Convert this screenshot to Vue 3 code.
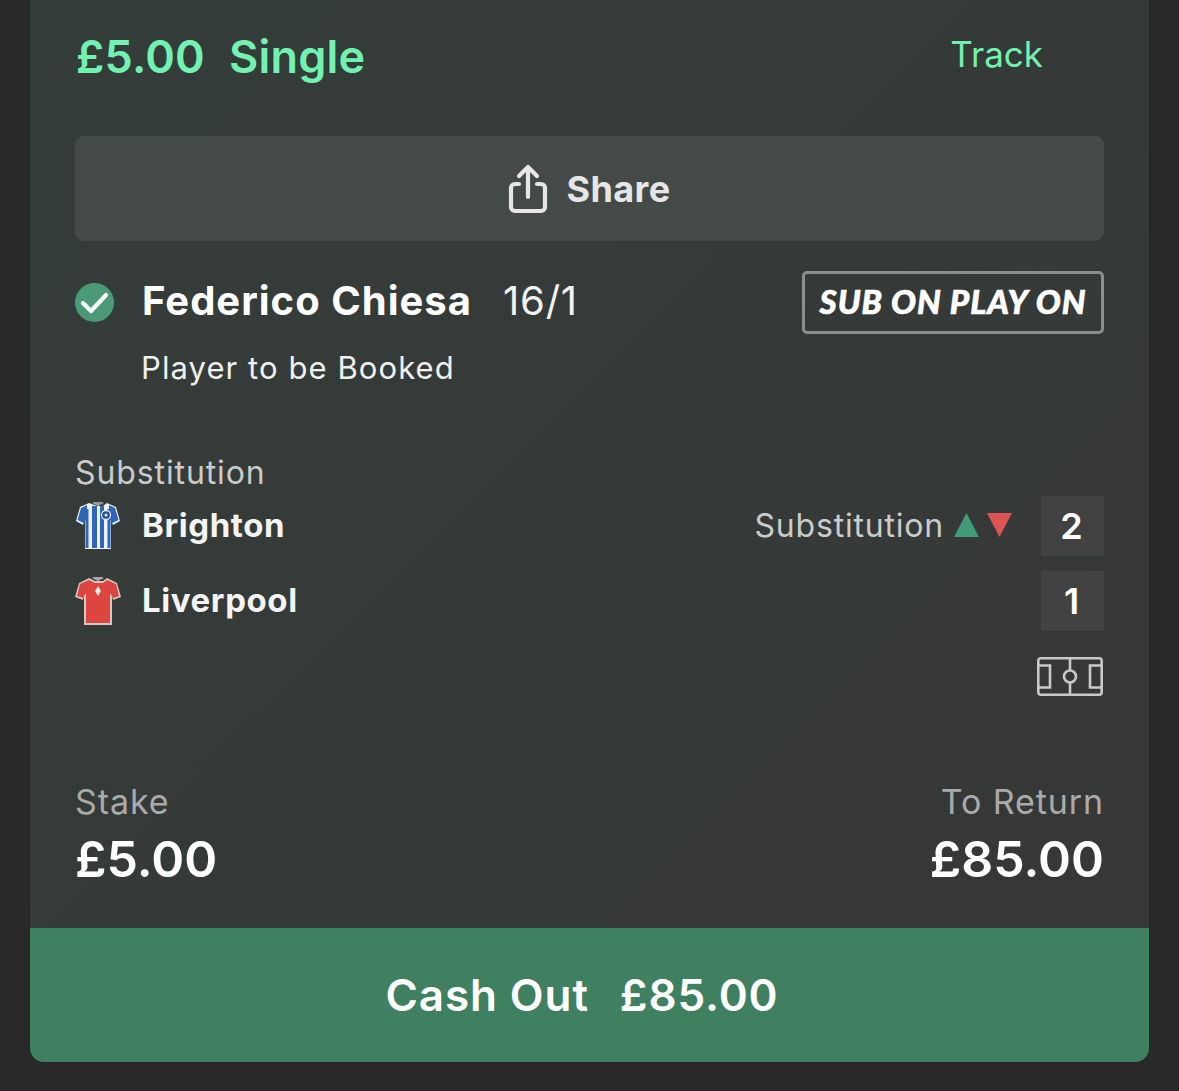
<script setup>
const teams = [
  { name: 'Brighton', score: 2, kit: 'blue' },
  { name: 'Liverpool', score: 1, kit: 'red' },
]
</script>

<template>
  <div class="page">
    <section class="card">
      <div class="body">
        <header class="head">
          <h1 class="title"><span>£5.00</span><span>Single</span></h1>
          <span class="track">Track</span>
        </header>

        <button class="share">
          <svg width="40" height="50" viewBox="0 0 40 50" fill="none" stroke="#e6e6e6" stroke-width="4.200" stroke-linecap="round" stroke-linejoin="round">
            <path d="M11 20H7a4 4 0 0 0-4 4v19a4 4 0 0 0 4 4h26a4 4 0 0 0 4-4V24a4 4 0 0 0-4-4h-4" />
            <path d="M20 33V4M11 12l9-9 9 9" />
          </svg>
          <span>Share</span>
        </button>

        <div class="selection">
          <div class="sel-top">
            <svg class="check" width="39" height="39" viewBox="0 0 39 39">
              <circle cx="19.500" cy="19.500" r="19.500" fill="#4a9a78" />
              <path d="M8 20l8 8 15-16" fill="none" stroke="#fff" stroke-width="4.200" stroke-linecap="round" stroke-linejoin="round" />
            </svg>
            <strong class="player">Federico Chiesa</strong>
            <span class="odds">16/1</span>
            <span class="badge">SUB ON PLAY ON</span>
          </div>
          <p class="market">Player to be Booked</p>
        </div>

        <p class="event">Substitution</p>
        <div class="teams">
          <div v-for="t in teams" :key="t.name" class="team">
            <svg class="kit" width="46" height="50" viewBox="0 0 46 50">
              <template v-if="t.kit === 'blue'">
                <path d="M14 2L5 6 1 20l7 4 2-5v29h26V19l2 5 7-4-4-14-9-4-4 3h-6z" fill="#eef2f8" />
                <path d="M2.500 19L6 7l6-3v14l-3.500 4zM43.500 19L40 7l-6-3v14l3.500 4z" fill="#2f66b8" />
                <path d="M10.500 8h3v39h-3zM17 5h5v42h-5zM25 5h4v42h-4zM32.500 8h3v39h-3z" fill="#2f66b8" />
                <circle cx="31" cy="14" r="4.500" fill="#234d96" stroke="#dfe8f5" stroke-width="1.300" />
                <circle cx="31" cy="14" r="1.500" fill="#eef2f8" />
                <path d="M17 2l6 3 6-3-2-1H19z" fill="#9a9a9a" />
              </template>
              <template v-else>
                <path d="M14 2L4 7 0 21l8 3 1-4v29h28V20l1 4 8-3-4-14-10-5-4 3h-8z" fill="#d9c5bf" />
                <path d="M14 4L5 8 2 20l6 2 3-5v30h24V17l3 5 6-2-3-12-9-4-4 3h-8z" fill="#dd4541" />
                <path d="M17 2l6 3 6-3-2-1h-8z" fill="#a8a8a8" />
                <path d="M23 10l3 5-3 5-3-5z" fill="#f5e9e6" />
              </template>
            </svg>
            <strong class="team-name">{{ t.name }}</strong>
            <div v-if="t.score === 2" class="live">
              <span>Substitution</span>
              <svg width="58" height="26" viewBox="0 0 58 26">
                <path d="M12.500 1L25 25H0z" fill="#3f9c76" />
                <path d="M33 1h25L45.500 25z" fill="#dc5552" />
              </svg>
            </div>
            <span class="score">{{ t.score }}</span>
          </div>
        </div>

        <div class="pitch-row">
          <svg width="66" height="40" viewBox="0 0 66 40" fill="none" stroke="#c9c9c9" stroke-width="2.600">
            <rect x="1.300" y="1.300" width="63.400" height="36.400" rx="2.500" />
            <path d="M33 1v13M33 25v13M2 8.500h11v22H2M64 8.500H53v22h11" />
            <circle cx="33" cy="19.500" r="6" />
          </svg>
        </div>

        <div class="totals">
          <div>
            <p class="label">Stake</p>
            <p class="amount">£5.00</p>
          </div>
          <div class="right">
            <p class="label">To Return</p>
            <p class="amount">£85.00</p>
          </div>
        </div>
      </div>

      <button class="cash"><span>Cash Out</span><span>£85.00</span></button>
    </section>
  </div>
</template>

<style scoped>
.page {
  width: 1179px;
  height: 1091px;
  box-sizing: border-box;
  padding: 0 30px 29px;
  display: flex;
  flex-direction: column;
  font-family: Inter, "Liberation Sans", sans-serif;
  background: #2a2929;
  overflow: hidden;
}
.card {
  flex: 1;
  display: flex;
  flex-direction: column;
  border-radius: 0 0 14px 14px;
  overflow: hidden;
  background: linear-gradient(135deg, #343d3a 0%, #353a38 50%, #373737 100%);
  box-shadow: 0 0 2px #1f2523;
}
.body {
  flex: 1;
  padding: 0 45px;
  display: flex;
  flex-direction: column;
}
p, h1 { margin: 0; font-weight: inherit; }
.head {
  height: 136px;
  padding-bottom: 24px;
  box-sizing: border-box;
  display: flex;
  align-items: center;
  justify-content: space-between;
}
.title {
  display: flex;
  gap: 24px;
  font-size: 45px;
  font-weight: 600;
  letter-spacing: 0.2px;
  color: #72f2b0;
  margin-left: 1px;
}
.track {
  font-size: 35px;
  color: #72f2b0;
  margin-right: 61px;
  margin-top: -4px;
}
.share {
  height: 105px;
  border: 0;
  border-radius: 9px;
  background: #434a48;
  color: #e6e6e6;
  font: 700 36px Inter, "Liberation Sans", sans-serif;
  letter-spacing: 0.4px;
  display: flex;
  align-items: center;
  justify-content: center;
  gap: 18px;
  padding: 0;
}
.selection { margin-top: 30px; }
.sel-top {
  display: flex;
  align-items: center;
  height: 63px;
}
.check { flex: none; margin-right: 28px; }
.player {
  font-size: 40px;
  font-weight: 700;
  color: #fff;
  letter-spacing: 1px;
  margin-top: -4px;
}
.odds {
  font-size: 40px;
  color: #f2f2f2;
  margin-left: 31px;
  letter-spacing: 0.8px;
  margin-top: -4px;
}
.badge {
  margin-left: auto;
  width: 302px;
  height: 63px;
  box-sizing: border-box;
  border: 3px solid #8c8e8d;
  border-radius: 5px;
  padding-bottom: 3px;
  display: flex;
  align-items: center;
  justify-content: center;
  font: italic 900 33px Lato, sans-serif;
  letter-spacing: 1px;
  -webkit-text-stroke: 0.7px #fff;
  color: #fff;
  white-space: nowrap;
}
.market {
  margin: 15px 0 0 66px;
  font-size: 31px;
  line-height: 38px;
  letter-spacing: 1.08px;
  color: #f0f0f0;
}
.event {
  margin-top: 66px;
  font-size: 32px;
  line-height: 40px;
  letter-spacing: 0.9px;
  color: #c9cccb;
}
.teams {
  display: flex;
  flex-direction: column;
  gap: 15px;
  margin-top: 3px;
}
.team {
  display: flex;
  align-items: center;
  height: 60px;
}
.kit { flex: none; margin-right: 21px; }
.team-name {
  font-size: 33px;
  font-weight: 700;
  color: #f4f4f4;
  letter-spacing: 0.6px;
  margin-top: -2px;
}
.live {
  margin-left: auto;
  margin-right: 29px;
  margin-top: -2px;
  display: flex;
  align-items: center;
  gap: 10px;
  font-size: 32px;
  letter-spacing: 0.8px;
  color: #c9cccb;
}
.score {
  width: 63px;
  height: 60px;
  padding-right: 2px;
  box-sizing: border-box;
  display: flex;
  align-items: center;
  justify-content: center;
  background: #414241;
  color: #fff;
  font-size: 36px;
  font-weight: 600;
}
.team:last-child .score { margin-left: auto; }
.pitch-row {
  display: flex;
  justify-content: flex-end;
  margin-top: 26px;
  padding-right: 1px;
}
.totals {
  display: flex;
  justify-content: space-between;
  margin-top: 83px;
}
.right { text-align: right; }
.label {
  font-size: 34px;
  line-height: 44px;
  letter-spacing: 0.9px;
  color: #a8abaa;
}
.amount {
  margin-top: 5px;
  font-size: 50px;
  line-height: 60px;
  font-weight: 600;
  color: #fff;
}
.cash {
  height: 134px;
  flex: none;
  border: 0;
  background: #3f8060;
  color: #fff;
  font: 600 44px Inter, "Liberation Sans", sans-serif;
  letter-spacing: 0.9px;
  display: flex;
  align-items: center;
  justify-content: center;
  gap: 31px;
  padding: 0 15px 0 0;
}
</style>
